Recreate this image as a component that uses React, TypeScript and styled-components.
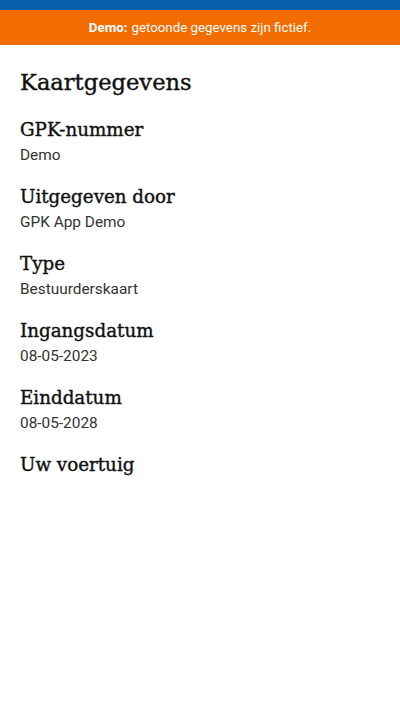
import * as React from 'react'
import styled, { createGlobalStyle } from 'styled-components'

const GlobalStyle = createGlobalStyle`
  html, body {
    margin: 0;
    padding: 0;
    background: #ffffff;
  }
  body {
    font-family: Roboto, 'Noto Sans', sans-serif;
  }
`

const details = [
  { label: 'GPK-nummer', value: 'Demo' },
  { label: 'Uitgegeven door', value: 'GPK App Demo' },
  { label: 'Type', value: 'Bestuurderskaart' },
  { label: 'Ingangsdatum', value: '08-05-2023' },
  { label: 'Einddatum', value: '08-05-2028' },
  { label: 'Uw voertuig' },
]

export default function App() {
  return (
    <>
      <GlobalStyle />
      <StatusBar />
      <DemoBanner>
        <strong>Demo:</strong> getoonde gegevens zijn fictief.
      </DemoBanner>
      <Content>
        <Title>Kaartgegevens</Title>
        {details.map((d) => (
          <Section key={d.label}>
            <Label>{d.label}</Label>
            {d.value && <Value>{d.value}</Value>}
          </Section>
        ))}
      </Content>
    </>
  )
}

const StatusBar = styled.div`
  height: 10px;
  background: #0a5faa;
`

const DemoBanner = styled.div`
  height: 35px;
  background: #f36c00;
  color: #ffffff;
  font-size: 13.3px;
  display: flex;
  align-items: center;
  justify-content: center;
  strong {
    font-weight: 700;
    margin-right: 4px;
  }
`

const Content = styled.div`
  padding: 20px 20px;
  display: flex;
  flex-direction: column;
`

const Title = styled.h1`
  margin: 0 0 18px;
  font-family: 'DejaVu Serif', 'Liberation Serif', serif;
  font-size: 22.6px;
  font-weight: 400;
  line-height: 34px;
  color: #111111;
  -webkit-text-stroke: 0.4px #111111;
`

const Section = styled.div`
  display: flex;
  flex-direction: column;
  margin-bottom: 17px;
`

const Label = styled.h2`
  margin: 0;
  font-family: 'DejaVu Serif', 'Liberation Serif', serif;
  font-size: 18.3px;
  font-weight: 400;
  line-height: 26px;
  color: #111111;
  -webkit-text-stroke: 0.4px #111111;
`

const Value = styled.div`
  font-size: 15.4px;
  line-height: 24px;
  color: #333333;
`
